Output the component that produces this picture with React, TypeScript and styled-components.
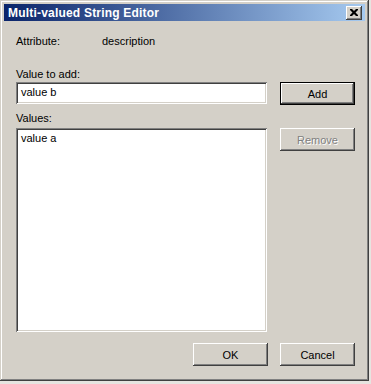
import React from "react";
import styled, { createGlobalStyle } from "styled-components";

const GlobalStyle = createGlobalStyle`
  html, body {
    margin: 0;
    padding: 0;
    background: #e6e4e0;
  }
  body {
    font-family: "Liberation Sans", Arial, sans-serif;
    font-size: 11px;
  }
`;

const Window = styled.div`
  width: 369px;
  height: 381px;
  box-sizing: border-box;
  padding: 4px;
  background: #d4d0c8;
  box-shadow: inset -1px -1px #404040, inset 1px 1px #d4d0c8,
    inset -2px -2px #808080, inset 2px 2px #ffffff;
  display: flex;
  flex-direction: column;
`;

const TitleBar = styled.div`
  height: 18px;
  display: flex;
  align-items: center;
  justify-content: space-between;
  padding: 0 3px 0 4px;
  background: linear-gradient(to right, #0a246a, #a6caf0);
  color: #ffffff;
  font-weight: bold;
  font-size: 12px;
`;

const TitleText = styled.span`
  letter-spacing: 0.2px;
`;

const CloseButton = styled.div`
  width: 16px;
  height: 14px;
  box-sizing: border-box;
  background: #d4d0c8;
  box-shadow: inset -1px -1px #404040, inset 1px 1px #ffffff,
    inset -2px -2px #808080, inset 2px 2px #d4d0c8;
  display: flex;
  align-items: center;
  justify-content: center;
`;

const Body = styled.div`
  flex: 1;
  padding: 14px 10px 11px 12px;
  display: flex;
  flex-direction: column;
  color: #000000;
`;

const AttributeRow = styled.div`
  display: flex;
  line-height: 13px;
  height: 13px;
`;

const AttributeLabel = styled.span`
  width: 86px;
`;

const Label = styled.div<{ $top: number; $bottom?: number }>`
  line-height: 13px;
  margin-top: ${(p) => p.$top}px;
  margin-bottom: ${(p) => p.$bottom ?? 1}px;
`;

const Row = styled.div`
  display: grid;
  grid-template-columns: 251px 75px;
  column-gap: 13px;
  align-items: start;
`;

const Field = styled.div<{ $height: number }>`
  height: ${(p) => p.$height}px;
  box-sizing: border-box;
  background: #ffffff;
  padding: 4px 5px;
  line-height: 13px;
  box-shadow: inset 1px 1px #808080, inset -1px -1px #ffffff,
    inset 2px 2px #404040, inset -2px -2px #d4d0c8;
`;

const Button = styled.div<{ $default?: boolean; $disabled?: boolean }>`
  width: 75px;
  height: 23px;
  box-sizing: border-box;
  display: flex;
  align-items: center;
  justify-content: center;
  background: #d4d0c8;
  border: ${(p) => (p.$default ? "1px solid #000000" : "none")};
  color: ${(p) => (p.$disabled ? "#808080" : "#000000")};
  text-shadow: ${(p) => (p.$disabled ? "1px 1px 0 #ffffff" : "none")};
  box-shadow: inset -1px -1px #404040, inset 1px 1px #ffffff,
    inset -2px -2px #808080, inset 2px 2px #d4d0c8;
`;

const Footer = styled.div`
  margin-top: 11px;
  display: flex;
  justify-content: flex-end;
  gap: 12px;
`;

export default function App() {
  return (
    <>
      <GlobalStyle />
      <Window>
        <TitleBar>
          <TitleText>Multi-valued String Editor</TitleText>
          <CloseButton>
            <svg width="8" height="7" viewBox="0 0 8 7">
              <path
                d="M0 0h2l2 2 2-2h2v1L5.5 3.5 8 6v1H6L4 5 2 7H0V6l2.5-2.5L0 1z"
                fill="#000"
              />
            </svg>
          </CloseButton>
        </TitleBar>
        <Body>
          <AttributeRow>
            <AttributeLabel>Attribute:</AttributeLabel>
            <span>description</span>
          </AttributeRow>
          <Label $top={20}>Value to add:</Label>
          <Row>
            <Field $height={22}>value b</Field>
            <Button $default>Add</Button>
          </Row>
          <Label $top={7} $bottom={3}>
            Values:
          </Label>
          <Row>
            <Field $height={204}>value a</Field>
            <Button $disabled>Remove</Button>
          </Row>
          <Footer>
            <Button>OK</Button>
            <Button>Cancel</Button>
          </Footer>
        </Body>
      </Window>
    </>
  );
}
